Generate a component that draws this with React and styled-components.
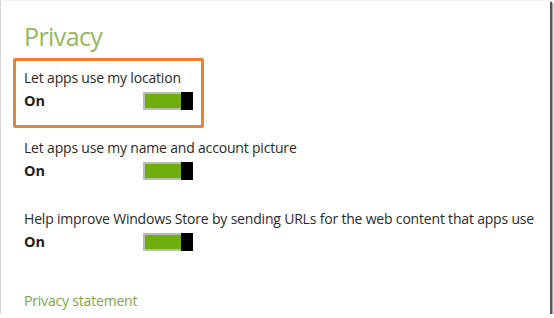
import styled, { createGlobalStyle } from "styled-components";

const GlobalStyle = createGlobalStyle`
  body {
    margin: 0;
    background: #ffffff;
    font-family: "Open Sans", "Noto Sans", sans-serif;
  }
`;

const Frame = styled.div`
  width: 550px;
  height: 314px;
  box-sizing: border-box;
  border-left: 1px solid #d6d6d6;
  border-top: 1px solid #f2f2f2;
  box-shadow: 2px 2px 1px #555555, 3px 3px 2px #9a9a9a;
  background: #ffffff;
  padding: 0 0 0 23px;
  overflow: hidden;
`;

const Title = styled.h1`
  margin: 18px 0 0;
  font-size: 25px;
  line-height: 34px;
  font-weight: 400;
  letter-spacing: -0.6px;
  color: #95b85c;
`;

const Highlight = styled.div`
  margin: 5px 0 0 -11px;
  width: 191px;
  height: 70px;
  box-sizing: border-box;
  border: 3px solid #e8842c;
  border-radius: 2px;
  padding: 7px 0 0 8px;
`;

const Setting = styled.div`
  margin-top: ${(p) => p.$gap || 0}px;
`;

const Label = styled.div`
  font-size: 14px;
  line-height: 20px;
  letter-spacing: -0.19px;
  color: #2a2a2a;
  white-space: nowrap;
`;

const Control = styled.div`
  display: flex;
  align-items: center;
  margin-top: 3px;
`;

const State = styled.span`
  width: 119px;
  font-size: 14.5px;
  font-weight: 700;
  color: #1e1e1e;
`;

const Toggle = styled.div`
  display: flex;
  width: 50px;
  height: 18px;
`;

const Track = styled.div`
  flex: 1;
  box-sizing: border-box;
  border: 2px solid #b9beb2;
  border-right: none;
  background: #6fae0e;
`;

const Thumb = styled.div`
  width: 12px;
  background: #000000;
`;

const Link = styled.a`
  display: block;
  margin-top: 40px;
  font-size: 14px;
  line-height: 20px;
  letter-spacing: -0.19px;
  color: #7ea548;
  text-decoration: none;
`;

const Switch = () => (
  <Toggle>
    <Track />
    <Thumb />
  </Toggle>
);

const Row = ({ label, gap }) => (
  <Setting $gap={gap}>
    <Label>{label}</Label>
    <Control>
      <State>On</State>
      <Switch />
    </Control>
  </Setting>
);

export default function App() {
  return (
    <>
      <GlobalStyle />
      <Frame>
        <Title>Privacy</Title>
        <Highlight>
          <Row label="Let apps use my location" />
        </Highlight>
        <Row label="Let apps use my name and account picture" gap={10} />
        <Row
          label="Help improve Windows Store by sending URLs for the web content that apps use"
          gap={29}
        />
        <Link href="#">Privacy statement</Link>
      </Frame>
    </>
  );
}
